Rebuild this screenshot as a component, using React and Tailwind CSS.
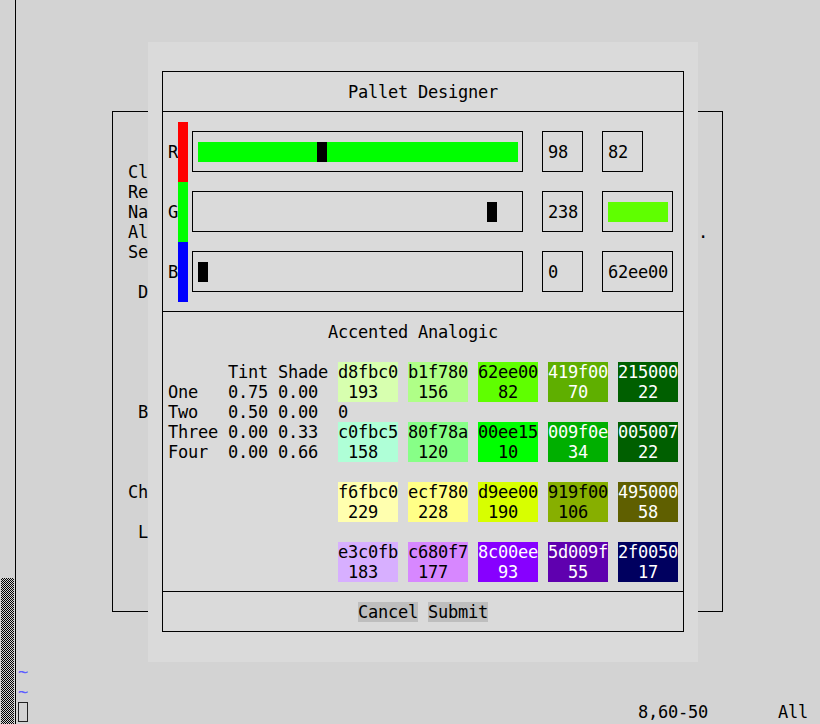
import React from 'react';

// xterm-256 approximations of the palette, [hex, index, bg class, light text]
const palette = [
  [
    ['d8fbc0', '193', 'bg-[#d7ffaf]', false],
    ['b1f780', '156', 'bg-[#afff87]', false],
    ['62ee00', '82', 'bg-[#5fff00]', false],
    ['419f00', '70', 'bg-[#5faf00]', true],
    ['215000', '22', 'bg-[#005f00]', true],
  ],
  [
    ['c0fbc5', '158', 'bg-[#afffd7]', false],
    ['80f78a', '120', 'bg-[#87ff87]', false],
    ['00ee15', '10', 'bg-[#00ff00]', false],
    ['009f0e', '34', 'bg-[#00af00]', true],
    ['005007', '22', 'bg-[#005f00]', true],
  ],
  [
    ['f6fbc0', '229', 'bg-[#ffffaf]', false],
    ['ecf780', '228', 'bg-[#ffff87]', false],
    ['d9ee00', '190', 'bg-[#d7ff00]', false],
    ['919f00', '106', 'bg-[#87af00]', false],
    ['495000', '58', 'bg-[#5f5f00]', true],
  ],
  [
    ['e3c0fb', '183', 'bg-[#d7afff]', false],
    ['c680f7', '177', 'bg-[#d787ff]', false],
    ['8c00ee', '93', 'bg-[#8700ff]', true],
    ['5d009f', '55', 'bg-[#5f00af]', true],
    ['2f0050', '17', 'bg-[#00005f]', true],
  ],
];

const channels = [
  { label: 'R', bar: 'bg-[#ff0000]', value: 98, active: true, extra: 'num', text: '82' },
  { label: 'G', bar: 'bg-[#00ff00]', value: 238, active: false, extra: 'swatch' },
  { label: 'B', bar: 'bg-[#0000ff]', value: 0, active: false, extra: 'hex', text: '62ee00' },
];

const tableLines = [
  '      Tint Shade',
  'One   0.75 0.00',
  'Two   0.50 0.00  0',
  'Three 0.00 0.33',
  'Four  0.00 0.66',
];

const formLines = [
  'Cl', 'Re', 'Na', 'Al'.padEnd(57) + '.', 'Se', '', ' D', '', '', '', '', '',
  ' B', '', '', '', 'Ch', '', ' L',
];

const center = (s) => ' '.repeat(Math.floor((6 - s.length) / 2)) + s;

const ChannelRow = ({ c }) => (
  <div className="flex h-[60px]">
    <div className="w-[10px] pt-[20px]">{c.label}</div>
    <div className={`w-[10px] h-[60px] ${c.bar}`} />
    <div className="relative ml-[4px] mt-[9px] w-[331px] h-[41px] border border-black">
      {c.active && <div className="absolute left-[5px] top-[10px] w-[320px] h-[20px] bg-[#00ff00]" />}
      <div
        className="absolute top-[10px] w-[10px] h-[20px] bg-black"
        style={{ left: 5 + (c.value / 255) * 310 }}
      />
    </div>
    <div className="ml-[19px] mt-[9px] w-[41px] h-[41px] border border-black pl-[5px] pt-[10px]">
      {c.value}
    </div>
    {c.extra === 'num' && (
      <div className="ml-[19px] mt-[9px] w-[41px] h-[41px] border border-black pl-[5px] pt-[10px]">
        {c.text}
      </div>
    )}
    {c.extra === 'swatch' && (
      <div className="ml-[19px] mt-[9px] w-[71px] h-[41px] border border-black pl-[5px] pt-[10px]">
        <div className="w-[60px] h-[20px] bg-[#5fff00]" />
      </div>
    )}
    {c.extra === 'hex' && (
      <div className="ml-[19px] mt-[9px] w-[71px] h-[41px] border border-black pl-[5px] pt-[10px]">
        {c.text}
      </div>
    )}
  </div>
);

const Swatch = ({ s }) => (
  <div className={`w-[60px] h-[40px] whitespace-pre ${s[2]} ${s[3] ? 'text-white' : 'text-black'}`}>
    <div>{s[0]}</div>
    <div>{center(s[1])}</div>
  </div>
);

export default function App() {
  return (
    <div className="relative w-[820px] h-[724px] overflow-hidden bg-[#d3d3d3] text-black font-['DejaVu_Sans_Mono',monospace] text-[17px] leading-[20px] tracking-[-0.236px]">
      <div className="flex h-full">
        {/* left split with scroll pattern */}
        <div className="flex flex-col w-[16px] h-full border-r border-black">
          <div className="flex-1" />
          <div className="ml-[1px] w-[13px] h-[146px] bg-[repeating-conic-gradient(#000_0_25%,#d3d3d3_0_50%)] bg-[length:2px_2px]" />
        </div>

        {/* buffer */}
        <div className="flex flex-col justify-end flex-1 pl-[2px] pb-[2px] whitespace-pre">
          <div className="h-[20px] text-[#5f5fff]">~</div>
          <div className="h-[20px] text-[#5f5fff]">~</div>
          <div className="flex h-[20px]">
            <div className="w-[10px] h-[20px] border border-[#222]" />
            <span>{' '.repeat(61) + '8,60-50' + ' '.repeat(7) + 'All'}</span>
          </div>
        </div>
      </div>

      {/* form popup behind */}
      <div className="absolute left-[112px] top-[111px] w-[611px] h-[501px] border border-black pt-[50px] pl-[15px] whitespace-pre">
        {formLines.map((l, i) => (
          <div key={i} className="h-[20px]">{l}</div>
        ))}
      </div>

      {/* pallet designer dialog */}
      <div className="absolute left-[148px] top-[42px] w-[550px] h-[620px] bg-[#dadada] pl-[14px] pt-[29px]">
        <div className="flex flex-col w-[522px] h-[561px] border border-black">
          <div className="h-[39px] pt-[10px] pl-[185px] whitespace-pre">Pallet Designer</div>

          <div className="h-[200px] border-t border-black pt-[10px] pl-[5px]">
            {channels.map((c) => (
              <ChannelRow key={c.label} c={c} />
            ))}
          </div>

          <div className="h-[280px] border-t border-black pt-[10px]">
            <div className="pl-[165px] whitespace-pre">Accented Analogic</div>
            <div className="flex mt-[20px] pl-[5px]">
              <div className="w-[170px] whitespace-pre">
                {tableLines.map((l, i) => (
                  <div key={i} className="h-[20px]">{l}</div>
                ))}
              </div>
              <div className="flex flex-col gap-[20px]">
                {palette.map((row, i) => (
                  <div key={i} className="flex gap-[10px]">
                    {row.map((s) => (
                      <Swatch key={s[0]} s={s} />
                    ))}
                  </div>
                ))}
              </div>
            </div>
          </div>

          <div className="flex-1 border-t border-black pt-[10px] flex justify-center gap-[10px]">
            <button className="h-[20px] bg-[#bebebe] leading-[20px]">Cancel</button>
            <button className="h-[20px] bg-[#bebebe] leading-[20px]">Submit</button>
          </div>
        </div>
      </div>
    </div>
  );
}
